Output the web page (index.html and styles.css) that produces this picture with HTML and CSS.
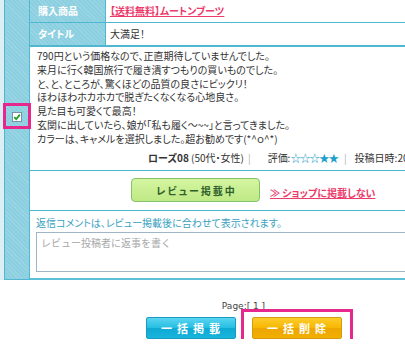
FILE: index.html
```html
<!DOCTYPE html>
<html lang="ja">
<head>
    <meta charset="UTF-8">
    <meta name="viewport" content="width=device-width, initial-scale=1.0">
    <title>レビュー管理</title>
    <link rel="stylesheet" href="styles.css">
</head>
<body>
    <div class="page">
        <div class="review">
            <div class="check-col">
                <span class="check marked">
                    <svg width="8" height="8" viewBox="0 0 8 8"><path d="M1.2 4.2 L3.2 6.2 L6.8 1.6" fill="none" stroke="#1fa01f" stroke-width="1.8"/></svg>
                </span>
            </div>
            <div class="review-main">
                <div class="row">
                    <div class="label">購入商品</div>
                    <div class="value"><a class="item-link" href="#">【送料無料】ムートンブーツ</a></div>
                </div>
                <div class="row row-title">
                    <div class="label">タイトル</div>
                    <div class="value">大満足！</div>
                </div>
                <div class="body">
                    <p class="comment">790円という価格なので、正直期待していませんでした。<br>来月に行く韓国旅行で履き潰すつもりの買いものでした。<br>と、と、ところが、驚くほどの品質の良さにビックリ！<br>ほわほわホカホカで脱ぎたくなくなる心地良さ。<br>見た目も可愛くて最高！<br>玄関に出していたら、娘が「私も履く～~~」と言ってきました。<br>カラーは、キャメルを選択しました。超お勧めです(*^ｏ^*)</p>
                    <div class="meta"><b>ローズ08</b> (50代・女性)<span class="sep">|</span>評価:<span class="stars">☆☆☆★★</span><span class="sep sep-date">|</span>投稿日時:2012/11/20 10:25</div>
                </div>
                <div class="actions">
                    <button class="btn-posted">レビュー掲載中</button>
                    <a class="hide-link" href="#">≫ ショップに掲載しない</a>
                </div>
                <div class="reply">
                    <p class="reply-note">返信コメントは、レビュー掲載後に合わせて表示されます。</p>
                    <textarea class="reply-box" placeholder="レビュー投稿者に返事を書く"></textarea>
                </div>
            </div>
        </div>
        <div class="footer">
            <div class="pager">Page:[ 1 ]</div>
            <div class="bulk">
                <button class="btn-bulk btn-publish">一括掲載</button>
                <span class="marked"><button class="btn-bulk btn-delete">一括削除</button></span>
            </div>
        </div>
    </div>
</body>
</html>
```
FILE: styles.css
```css
body {
    margin: 0;
    background: #ffffff;
    overflow: hidden;
}
.page {
    width: 487px;
    font-family: "Noto Sans CJK JP", "Liberation Sans", sans-serif;
    font-feature-settings: "palt";
    font-size: 10px;
    color: #333333;
}
.review {
    display: flex;
    background-color: #dbeff5;
    padding-left: 4px;
}
.check-col {
    width: 24px;
    flex-shrink: 0;
    background-color: #8ccfe0;
    background-image: repeating-linear-gradient(45deg, rgba(255, 255, 255, 0.12) 0 1px, transparent 1px 3px);
    border-left: 1px solid #4fb7d0;
    border-right: 1px solid #4fb7d0;
    border-bottom: 1px solid #4fb7d0;
    display: flex;
    justify-content: center;
    padding-top: 112px;
}
.check {
    width: 10px;
    height: 10px;
    box-sizing: border-box;
    border: 1px solid #7890ac;
    background: #ffffff;
    display: flex;
    align-items: center;
    justify-content: center;
}
.marked {
    position: relative;
}
.marked::after {
    content: "";
    position: absolute;
    border: 3px solid #e6278b;
}
.check.marked::after {
    top: -10px;
    bottom: -8px;
    left: -10px;
    right: -10px;
}
.review-main {
    flex: 1;
    background: #ffffff;
}
.row {
    display: flex;
    height: 22px;
    border-bottom: 1px solid #4fb7d0;
}
.row-title {
    border-bottom-width: 2px;
}
.label {
    width: 76px;
    box-sizing: border-box;
    padding-left: 8px;
    line-height: 22px;
    color: #ffffff;
    font-weight: bold;
    background-color: #8ccfe0;
    background-image: repeating-linear-gradient(45deg, rgba(255, 255, 255, 0.12) 0 1px, transparent 1px 3px);
    border-right: 1px solid #4fb7d0;
}
.value {
    padding-left: 4px;
    line-height: 22px;
}
.item-link {
    color: #ec3a6a;
    font-weight: bold;
}
.body {
    padding: 2px 6px 5px 7px;
    border-bottom: 1px solid #4fb7d0;
}
.comment {
    margin: 0;
    line-height: 13.8px;
}
.meta {
    margin-top: 5px;
    padding-left: 111px;
    line-height: 14px;
    white-space: nowrap;
}
.sep {
    color: #b0b0b0;
    margin: 0 17px 0 4px;
}
.sep-date {
    margin: 0 8px 0 6px;
}
.stars {
    color: #1f9fcb;
    font-size: 10.5px;
    letter-spacing: -1px;
}
.actions {
    display: flex;
    align-items: center;
    height: 39px;
    padding-left: 101px;
    border-bottom: 1px solid #4fb7d0;
}
.btn-posted {
    width: 129px;
    height: 24px;
    font-family: inherit;
    font-feature-settings: "palt";
    font-size: 10px;
    font-weight: bold;
    letter-spacing: 2px;
    padding: 0 0 0 2px;
    color: #2f5f2a;
    background: linear-gradient(#d4f5a0, #bfe986);
    border: 1px solid #86c26a;
    border-radius: 4px;
}
.hide-link {
    margin-left: 10px;
    margin-top: 4px;
    color: #ec3a6a;
    font-weight: bold;
}
.reply {
    padding: 5px 0 6px 6px;
    border-bottom: 2px solid #5cc1d8;
}
.reply-note {
    margin: 0 0 2px;
    color: #3a9fc0;
    line-height: 14px;
}
.reply-box {
    display: block;
    width: 460px;
    height: 40px;
    box-sizing: border-box;
    margin: 0;
    padding: 2px 4px;
    border: 1px solid #a2b4c8;
    font-family: inherit;
    font-size: 10px;
    resize: both;
}
.reply-box::placeholder {
    color: #a8a8a8;
}
.footer {
    text-align: center;
    padding-top: 19px;
}
.pager {
    line-height: 14px;
    color: #444444;
    font-family: "DejaVu Sans", sans-serif;
    font-size: 9px;
}
.bulk {
    display: flex;
    justify-content: center;
    gap: 16px;
    margin-top: 4px;
}
.btn-bulk {
    display: block;
    width: 90px;
    height: 22px;
    padding: 0 0 0 5px;
    font-family: inherit;
    font-size: 11px;
    font-weight: bold;
    letter-spacing: 5px;
    color: #ffffff;
    border-radius: 2px;
}
.btn-publish {
    background: linear-gradient(#5ad4f0 0%, #24bde2 50%, #0eaad4 51%, #18b4dc 100%);
    border: 1px solid #1a9cc2;
}
.btn-delete {
    background: linear-gradient(#fdcc2c 0%, #f6b700 50%, #eca600 51%, #f2b000 100%);
    border: 1px solid #d69a0c;
}
.bulk .marked::after {
    top: -8px;
    bottom: -8px;
    left: -11px;
    right: -11px;
}
```
